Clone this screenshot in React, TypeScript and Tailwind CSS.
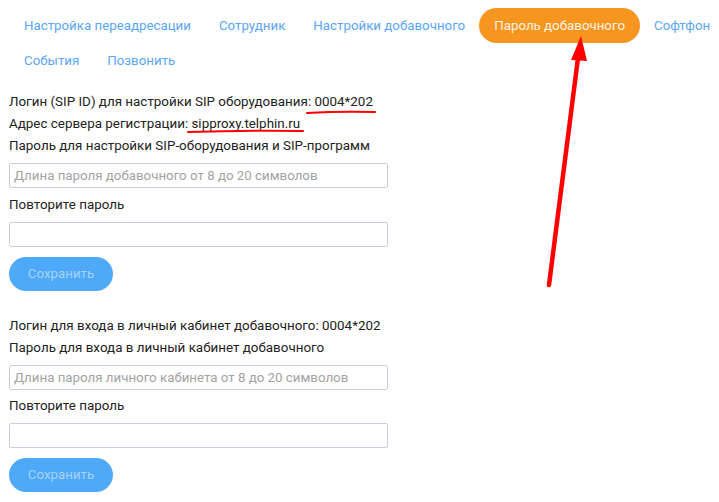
import React from "react";

const row1 = [
  { label: "Настройка переадресации" },
  { label: "Сотрудник" },
  { label: "Настройки добавочного" },
  { label: "Пароль добавочного", active: true },
  { label: "Софтфон" },
];
const row2 = [{ label: "События" }, { label: "Позвонить" }];

function Tab({ label, active }: { label: string; active?: boolean }) {
  return active ? (
    <span className="flex h-[35px] shrink-0 items-center whitespace-nowrap rounded-full bg-[#f7961f] px-[15px] text-[13.3px] text-[#fdf3e6]">
      {label}
    </span>
  ) : (
    <span className="flex h-[35px] shrink-0 items-center whitespace-nowrap px-[14px] text-[13.3px] text-[#5aa6f6]">
      {label}
    </span>
  );
}

function Input({ placeholder }: { placeholder?: string }) {
  return (
    <input
      type="password"
      placeholder={placeholder}
      className="mt-[6px] block h-[25px] w-[379px] rounded-[2px] border border-[#c9d0dc] bg-white px-[4px] text-[13.3px] text-[#333] placeholder:text-[#a3a3a3] outline-none"
    />
  );
}

function SaveButton() {
  return (
    <button className="mt-[10px] flex h-[34px] w-[104px] items-center justify-center rounded-full bg-[#4ea9f9] text-[13.3px] text-[#a6d3fb]">
      Сохранить
    </button>
  );
}

function Line({ children }: { children: React.ReactNode }) {
  return <div className="h-[22px] leading-[22px] text-[13.4px] text-[#222]">{children}</div>;
}

export default function App() {
  return (
    <div
      className="relative h-[502px] w-[719px] overflow-hidden bg-white"
      style={{ fontFamily: "Roboto, 'Liberation Sans', sans-serif" }}
    >
      <nav className="flex flex-col pl-[10px] pt-[8px]">
        <div className="flex">
          {row1.map((t) => (
            <Tab key={t.label} label={t.label} active={t.active} />
          ))}
        </div>
        <div className="flex">
          {row2.map((t) => (
            <Tab key={t.label} label={t.label} />
          ))}
        </div>
      </nav>

      <div className="pl-[9px] pt-[13px]">
        <Line>Логин (SIP ID) для настройки SIP оборудования: 0004*202</Line>
        <Line>Адрес сервера регистрации: sipproxy.telphin.ru</Line>
        <Line>Пароль для настройки SIP-оборудования и SIP-программ</Line>
        <Input placeholder="Длина пароля добавочного от 8 до 20 символов" />
        <div className="mt-[6px]">
          <Line>Повторите пароль</Line>
        </div>
        <Input />
        <SaveButton />

        <div className="mt-[24px]">
          <Line>Логин для входа в личный кабинет добавочного: 0004*202</Line>
          <Line>Пароль для входа в личный кабинет добавочного</Line>
        </div>
        <Input placeholder="Длина пароля личного кабинета от 8 до 20 символов" />
        <div className="mt-[5px]">
          <Line>Повторите пароль</Line>
        </div>
        <Input />
        <SaveButton />
      </div>

      <svg
        className="pointer-events-none absolute left-0 top-0"
        width="719"
        height="502"
        viewBox="0 0 719 502"
      >
        <path d="M307 113 Q340 111 375 112" stroke="#ff0000" strokeWidth="2" fill="none" strokeLinecap="round" />
        <path d="M188 132 Q245 130 303 131" stroke="#ff0000" strokeWidth="2" fill="none" strokeLinecap="round" />
        <line x1="549" y1="285" x2="578" y2="58" stroke="#ff0000" strokeWidth="4.5" strokeLinecap="round" />
        <polygon points="581,36 571,60 587,61" fill="#ff0000" />
      </svg>
    </div>
  );
}
